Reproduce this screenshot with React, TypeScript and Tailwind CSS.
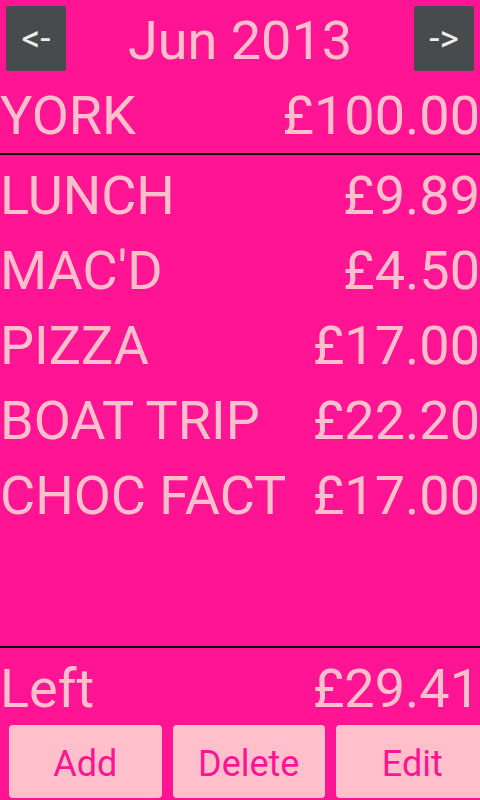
import React from "react";

const items: [string, string][] = [
  ["LUNCH", "£9.89"],
  ["MAC'D", "£4.50"],
  ["PIZZA", "£17.00"],
  ["BOAT TRIP", "£22.20"],
  ["CHOC FACT", "£17.00"],
];

export default function App() {
  return (
    <div
      className="w-[480px] h-[800px] bg-[#ff1493] overflow-hidden flex flex-col text-[#ffc0cb]"
      style={{ fontFamily: "Roboto, 'Noto Sans', sans-serif" }}
    >
      <div className="h-[84px] flex items-start justify-between shrink-0">
        <button className="mt-[6px] ml-[6px] w-[60px] h-[65px] rounded-[2px] bg-[#474b4e] text-[#ededed] text-[37px] leading-none flex items-center justify-center">
          &lt;-
        </button>
        <div className="mt-[9px] text-[54px] leading-[63px]">Jun 2013</div>
        <button className="mt-[6px] mr-[6px] w-[60px] h-[65px] rounded-[2px] bg-[#474b4e] text-[#ededed] text-[37px] leading-none flex items-center justify-center">
          -&gt;
        </button>
      </div>
      <div className="h-[63px] flex justify-between text-[54px] leading-[63px] shrink-0">
        <span>YORK</span>
        <span>£100.00</span>
      </div>
      <div className="mt-[6px] h-[2px] bg-black shrink-0" />
      <div className="flex-1 pt-[3px] flex flex-col">
        {items.map(([n, a]) => (
          <div key={n} className="flex justify-between text-[54px] leading-[75px]">
            <span>{n}</span>
            <span>{a}</span>
          </div>
        ))}
      </div>
      <div className="h-[2px] bg-black shrink-0" />
      <div className="mt-[9px] h-[63px] flex justify-between text-[54px] leading-[63px] shrink-0">
        <span>Left</span>
        <span>£29.41</span>
      </div>
      <div className="mt-[5px] h-[73px] mb-[2px] flex gap-[11px] pl-[9px] shrink-0">
        {["Add", "Delete", "Edit"].map((b) => (
          <button
            key={b}
            className="w-[152.5px] h-[73px] shrink-0 rounded-[4px] bg-[#ffc0cb] text-[#ff1493] text-[36px] leading-none pt-[4px] flex items-center justify-center"
          >
            {b}
          </button>
        ))}
      </div>
    </div>
  );
}
